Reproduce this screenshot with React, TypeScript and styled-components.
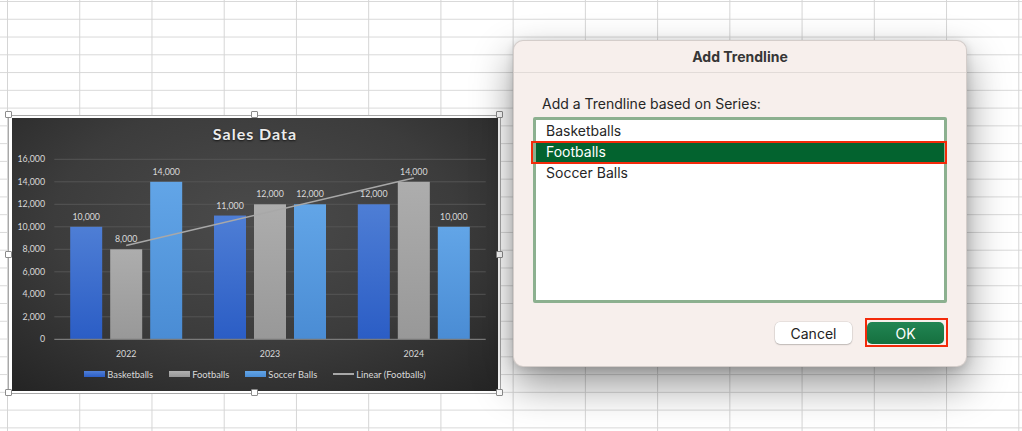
import React from 'react'
import styled, {createGlobalStyle} from 'styled-components'

const GlobalStyle = createGlobalStyle`
  html, body {
    margin: 0;
    padding: 0;
  }
  body {
    background: #fff;
    font-family: Inter, "Liberation Sans", sans-serif;
  }
`

const chartFont = `Lato, "Open Sans", "Liberation Sans", sans-serif`
const uiFont = `Inter, "Liberation Sans", sans-serif`

const Sheet = styled.div`
  position: relative;
  width: 1022px;
  height: 431px;
  overflow: hidden;
  background-color: #fff;
  background-image: linear-gradient(to right, #d5d5d5 1px, transparent 1px),
    linear-gradient(to bottom, #d9d9d9 1px, transparent 1px);
  background-size: 72.24px 17.77px;
  background-position: 7px 1px;
`

// chart object floating on the sheet
const ChartFrame = styled.div`
  position: absolute;
  left: 8px;
  top: 115px;
  width: 493px;
  height: 279px;
  box-sizing: border-box;
  border: 1px solid #a8a8a8;
  padding: 2px 2px 2px 3px;
  background: #fff;
`

type HandleProps = {$x: 'l' | 'c' | 'r'; $y: 't' | 'm' | 'b'}

const Handle = styled.span<HandleProps>`
  position: absolute;
  width: 7px;
  height: 7px;
  box-sizing: border-box;
  background: #fff;
  border: 1px solid #8c8c8c;
  border-radius: 1px;
  left: ${(p) => (p.$x === 'l' ? '-4px' : p.$x === 'c' ? 'calc(50% - 4px)' : 'calc(100% - 4px)')};
  top: ${(p) => (p.$y === 't' ? '-5px' : p.$y === 'm' ? 'calc(50% - 4px)' : 'calc(100% - 4px)')};
`

const ChartArea = styled.div`
  height: 100%;
  display: flex;
  flex-direction: column;
  background: radial-gradient(ellipse 75% 80% at 50% 38%, #4b4b4b 0%, #3c3c3c 55%, #252525 100%);
`

const ChartTitle = styled.div`
  height: 30px;
  box-sizing: border-box;
  padding-top: 6px;
  line-height: 20px;
  text-align: center;
  font-family: ${chartFont};
  font-weight: 700;
  font-size: 16px;
  letter-spacing: 1px;
  color: #ececec;
  text-shadow: 0 1px 2px rgba(0, 0, 0, 0.7);
`

const Plot = styled.svg`
  display: block;
  width: 486px;
  height: 218px;
  font-family: ${chartFont};
`

const Legend = styled.div`
  display: flex;
  justify-content: center;
  align-items: center;
  gap: 16px;
  height: 14px;
  margin-top: 1px;
  font-family: ${chartFont};
  font-size: 9.4px;
  color: #d9d9d9;
`

const LegendItem = styled.div`
  display: flex;
  align-items: center;
  gap: 2px;
`

const Swatch = styled.span<{$color: string; $line?: boolean}>`
  display: block;
  width: 21px;
  height: ${(p) => (p.$line ? '1.5px' : '6px')};
  background: ${(p) => p.$color};
`

// dialog
const Dialog = styled.div`
  position: absolute;
  left: 513px;
  top: 40px;
  width: 454px;
  height: 327px;
  box-sizing: border-box;
  background: #f7efec;
  border: 1px solid rgba(0, 0, 0, 0.14);
  border-radius: 10px;
  box-shadow: 0 18px 40px rgba(0, 0, 0, 0.42), 0 2px 10px rgba(0, 0, 0, 0.15);
  font-family: ${uiFont};
  color: #262626;
`

const DialogHeader = styled.div`
  height: 31px;
  border-bottom: 1px solid #e2dbd8;
  display: flex;
  align-items: center;
  justify-content: center;
  font-size: 14px;
  font-weight: 700;
  color: #363636;
`

const DialogBody = styled.div`
  padding: 22px 19px 0 19px;
`

const Prompt = styled.div`
  margin: 0 0 4px 9px;
  font-size: 14px;
  line-height: 18px;
`

const SeriesList = styled.div`
  height: 186px;
  box-sizing: border-box;
  border: 3px solid #8cb08f;
  border-radius: 2px;
  background: #fff;
`

const SeriesItem = styled.div<{$selected?: boolean}>`
  position: relative;
  height: 21px;
  line-height: 21px;
  padding-left: 10px;
  font-size: 14px;
  background: ${(p) => (p.$selected ? '#03632f' : 'transparent')};
  color: ${(p) => (p.$selected ? '#fff' : '#262626')};

  ${(p) =>
    p.$selected &&
    `
    &::after {
      content: '';
      position: absolute;
      top: 0;
      bottom: -2px;
      left: -5px;
      right: -3px;
      border: 2px solid #f32a0a;
    }
  `}
`

const Footer = styled.div`
  display: flex;
  justify-content: flex-end;
  gap: 15px;
  padding: 19px 3px 0 0;
`

const Button = styled.button<{$primary?: boolean}>`
  position: relative;
  width: 77px;
  height: 22px;
  border: none;
  border-radius: 5px;
  font-family: ${uiFont};
  font-size: 14px;
  color: ${(p) => (p.$primary ? '#fff' : '#222')};
  background: ${(p) => (p.$primary ? 'linear-gradient(#228553, #15703f)' : '#fff')};
  box-shadow: ${(p) =>
    p.$primary ? 'none' : '0 0 0 0.5px rgba(0,0,0,0.12), 0 1px 1.5px rgba(0,0,0,0.18)'};
  padding: 0;

  ${(p) =>
    p.$primary &&
    `
    &::after {
      content: '';
      position: absolute;
      top: -4px;
      bottom: -3px;
      left: -2px;
      right: -4px;
      border: 2px solid #f32a0a;
    }
  `}
`

const series = [
  {name: 'Basketballs', fill: 'url(#gBasket)', swatch: 'linear-gradient(#4f7fd6, #2c5ec6)'},
  {name: 'Footballs', fill: 'url(#gFoot)', swatch: 'linear-gradient(#b0b0b0, #979797)'},
  {name: 'Soccer Balls', fill: 'url(#gSoccer)', swatch: 'linear-gradient(#62a4e6, #4a8dd5)'},
]

const years = [
  {label: '2022', values: [10000, 8000, 14000]},
  {label: '2023', values: [11000, 12000, 12000]},
  {label: '2024', values: [12000, 14000, 10000]},
]

const plotLeft = 42.3
const plotRight = 473.7
const y0 = 191.3
const scale = 11.25 / 1000
const groupW = (plotRight - plotLeft) / 3
const yOf = (v: number) => y0 - v * scale
const fmt = (v: number) => v.toLocaleString('en-US')

function SalesChart() {
  const ticks = Array.from({length: 9}, (_, i) => i * 2000)
  const centers = years.map((_, i) => plotLeft + groupW * (i + 0.5))

  return (
    <Plot viewBox="0 0 486 218">
      <defs>
        <linearGradient id="gBasket" x1="0" y1="0" x2="0" y2="1">
          <stop offset="0" stopColor="#4e7ed5" />
          <stop offset="1" stopColor="#2b5dc5" />
        </linearGradient>
        <linearGradient id="gFoot" x1="0" y1="0" x2="0" y2="1">
          <stop offset="0" stopColor="#adadad" />
          <stop offset="1" stopColor="#989898" />
        </linearGradient>
        <linearGradient id="gSoccer" x1="0" y1="0" x2="0" y2="1">
          <stop offset="0" stopColor="#62a5e7" />
          <stop offset="1" stopColor="#4a8cd4" />
        </linearGradient>
      </defs>

      {ticks.map((t) => (
        <g key={t}>
          {t > 0 && (
            <line x1={plotLeft} x2={plotRight} y1={yOf(t)} y2={yOf(t)} stroke="#555" strokeWidth={1} />
          )}
          <text x={33} y={yOf(t) + 3} textAnchor="end" fontSize={8.8} fill="#d9d9d9">
            {fmt(t)}
          </text>
        </g>
      ))}

      {years.map((yr, i) => (
        <g key={yr.label}>
          {yr.values.map((v, s) => {
            const x = centers[i] - 16 + (s - 1) * 40
            return (
              <g key={s}>
                <rect x={x} y={yOf(v)} width={32} height={v * scale} fill={series[s].fill} />
                <text x={x + 16} y={yOf(v) - 7} textAnchor="middle" fontSize={8.8} fill="#d9d9d9">
                  {fmt(v)}
                </text>
              </g>
            )
          })}
          <text x={centers[i]} y={208.5} textAnchor="middle" fontSize={8.8} fill="#d9d9d9">
            {yr.label}
          </text>
        </g>
      ))}

      <line x1={plotLeft} x2={plotRight} y1={y0} y2={y0} stroke="#7a7a7a" strokeWidth={1.2} />

      <line
        x1={centers[0]}
        y1={yOf(8333.3)}
        x2={centers[2]}
        y2={yOf(14333.3)}
        stroke="#a8a8a8"
        strokeWidth={1.5}
      />
    </Plot>
  )
}

export default function App() {
  return (
    <Sheet>
      <GlobalStyle />
      <ChartFrame>
        <ChartArea>
          <ChartTitle>Sales Data</ChartTitle>
          <SalesChart />
          <Legend>
            {series.map((s) => (
              <LegendItem key={s.name}>
                <Swatch $color={s.swatch} />
                {s.name}
              </LegendItem>
            ))}
            <LegendItem>
              <Swatch $color="#a8a8a8" $line />
              Linear (Footballs)
            </LegendItem>
          </Legend>
        </ChartArea>
        <Handle $x="l" $y="t" />
        <Handle $x="c" $y="t" />
        <Handle $x="r" $y="t" />
        <Handle $x="l" $y="m" />
        <Handle $x="r" $y="m" />
        <Handle $x="l" $y="b" />
        <Handle $x="c" $y="b" />
        <Handle $x="r" $y="b" />
      </ChartFrame>

      <Dialog>
        <DialogHeader>Add Trendline</DialogHeader>
        <DialogBody>
          <Prompt>Add a Trendline based on Series:</Prompt>
          <SeriesList>
            <SeriesItem>Basketballs</SeriesItem>
            <SeriesItem $selected>Footballs</SeriesItem>
            <SeriesItem>Soccer Balls</SeriesItem>
          </SeriesList>
          <Footer>
            <Button>Cancel</Button>
            <Button $primary>OK</Button>
          </Footer>
        </DialogBody>
      </Dialog>
    </Sheet>
  )
}
